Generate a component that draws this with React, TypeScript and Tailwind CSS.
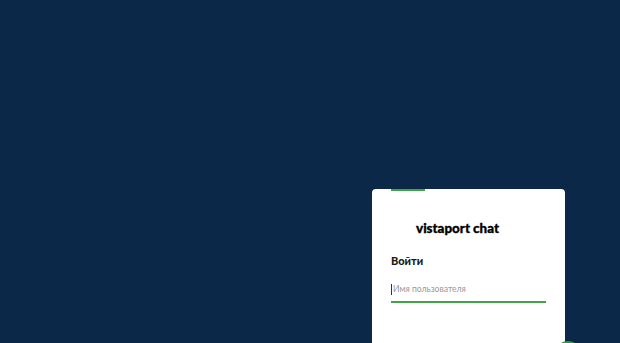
export default function App() {
  return (
    <div className="h-[343px] w-[620px] overflow-hidden bg-[#0b2848] pl-[372px] pt-[189px] font-['Lato',sans-serif]">
      <div className="relative h-[220px] w-[193px] rounded-t-[4px] bg-white">
        <div className="ml-[19px] h-[2px] w-[34px] bg-[#3fa548]" />
        <div className="pl-[44px] pt-[28px] text-[13.4px] font-black leading-[18px] text-black [-webkit-text-stroke:0.3px_black]">vistaport chat</div>
        <div className="pl-[19px] pt-[17px] text-[11px] font-black leading-[14px] text-[#1a1a1a]">Войти</div>
        <div className="mx-[19px] mt-[14px] flex h-[21px] items-start gap-px border-b-2 border-[#3fa548] pt-[2px]">
          <span className="h-[11px] w-px bg-[#333]" />
          <span className="text-[8.6px] leading-[11px] text-[#999]">Имя пользователя</span>
        </div>
        <div className="absolute right-[-16px] top-[152px] h-[26px] w-[26px] rounded-full bg-[#2e9a3e]" />
      </div>
    </div>
  )
}
